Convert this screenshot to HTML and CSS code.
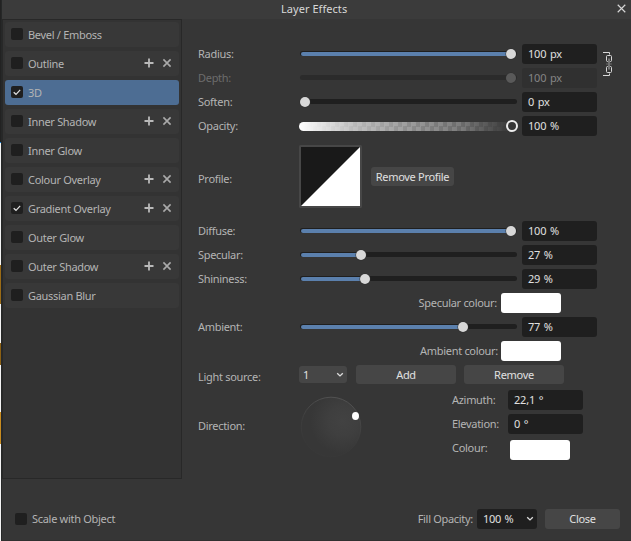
FILE: index.html
```
<!DOCTYPE html>
<html lang="en">
<head>
<meta charset="utf-8">
<title>Layer Effects</title>
<link rel="stylesheet" href="styles.css">
</head>
<body>
<svg width="0" height="0" class="defs">
  <symbol id="tick" viewBox="0 0 12 12"><path d="M2.7 6.2 5 8.3 9.2 3.9" fill="none" stroke="#e2e2e2" stroke-width="1.2"/></symbol>
  <symbol id="plus" viewBox="0 0 10 10"><path d="M5 .5v9M.5 5h9" stroke="#b9b9b9" stroke-width="1.8"/></symbol>
  <symbol id="cross" viewBox="0 0 10 10"><path d="M1.4 1.4 8.6 8.6M8.6 1.4 1.4 8.6" stroke="#a9a9a9" stroke-width="1.6"/></symbol>
  <symbol id="chevron" viewBox="0 0 8 6"><path d="M1.2 1.3 4 3.9 6.8 1.3" fill="none" stroke="#dcdcdc" stroke-width="1.4"/></symbol>
</svg>
<div class="app">
  <div class="backdrop"></div>
  <div class="dialog">
    <header class="titlebar">
      <h1>Layer Effects</h1>
      <svg class="close-x" viewBox="0 0 10 10"><path d="M.8.8 9.2 9.2M9.2.8.8 9.2" stroke="#d6d6d6" stroke-width="1.3"/></svg>
    </header>
    <main class="body">
      <ul class="effects">
        <li><i class="check"></i><span>Bevel / Emboss</span></li>
        <li><i class="check"></i><span>Outline</span><svg class="act"><use href="#plus"/></svg><svg class="act"><use href="#cross"/></svg></li>
        <li class="selected"><i class="check"><svg><use href="#tick"/></svg></i><span>3D</span></li>
        <li><i class="check"></i><span>Inner Shadow</span><svg class="act"><use href="#plus"/></svg><svg class="act"><use href="#cross"/></svg></li>
        <li><i class="check"></i><span>Inner Glow</span></li>
        <li><i class="check"></i><span>Colour Overlay</span><svg class="act"><use href="#plus"/></svg><svg class="act"><use href="#cross"/></svg></li>
        <li><i class="check"><svg><use href="#tick"/></svg></i><span>Gradient Overlay</span><svg class="act"><use href="#plus"/></svg><svg class="act"><use href="#cross"/></svg></li>
        <li><i class="check"></i><span>Outer Glow</span></li>
        <li><i class="check"></i><span>Outer Shadow</span><svg class="act"><use href="#plus"/></svg><svg class="act"><use href="#cross"/></svg></li>
        <li><i class="check"></i><span>Gaussian Blur</span></li>
      </ul>
      <section class="settings">
        <div class="linked">
          <div class="stack">
            <div class="row"><label>Radius:</label><div class="slider" style="--v:211px"><b></b></div><div class="field">100 px</div></div>
            <div class="row disabled"><label>Depth:</label><div class="slider" style="--v:211px"><b></b></div><div class="field">100 px</div></div>
            <div class="row"><label>Soften:</label><div class="slider empty" style="--v:5px"><b></b></div><div class="field">0 px</div></div>
            <div class="row"><label>Opacity:</label><div class="alpha"><b></b></div><div class="field">100 %</div></div>
          </div>
          <svg class="link" viewBox="0 0 10 26" fill="none">
            <path d="M0 1.5h6.500v2M0 24.500h6.500v-2" stroke="#d8d8d8"/>
            <path d="M5 10.500h-.5q-1 0-1-1v-4q0-1 1-1h3q1 0 1 1v4q0 1-1 1H7M5 15.500h-.5q-1 0-1 1v4q0 1 1 1h3q1 0 1-1v-4q0-1-1-1H7" stroke="#d8d8d8"/>
            <path d="M6 7.500v11" stroke="#8c8c8c" stroke-width="1.500"/>
            <path d="M3 13h6" stroke="#6c6c6c"/>
          </svg>
        </div>
        <div class="row profile"><label>Profile:</label>
          <svg class="curve" viewBox="0 0 63 63"><rect width="63" height="63" rx="1.500" fill="#474747"/><rect x="2" y="2" width="59" height="59" fill="#191919"/><path d="M61 2v59H2z" fill="#fff"/></svg>
          <button class="remove-profile">Remove Profile</button>
        </div>
        <div class="stack">
          <div class="row"><label>Diffuse:</label><div class="slider" style="--v:211px"><b></b></div><div class="field">100 %</div></div>
          <div class="row"><label>Specular:</label><div class="slider" style="--v:61px"><b></b></div><div class="field">27 %</div></div>
          <div class="row"><label>Shininess:</label><div class="slider" style="--v:65px"><b></b></div><div class="field">29 %</div></div>
          <div class="row colour"><span>Specular colour:</span><div class="swatch"></div></div>
          <div class="row"><label>Ambient:</label><div class="slider" style="--v:163px"><b></b></div><div class="field">77 %</div></div>
          <div class="row colour"><span class="amb">Ambient colour:</span><div class="swatch"></div></div>
        </div>
        <div class="row source"><label>Light source:</label>
          <div class="select small"><span>1</span><svg><use href="#chevron"/></svg></div>
          <button>Add</button><button>Remove</button>
        </div>
        <div class="row direction"><label>Direction:</label>
          <svg class="dial" viewBox="0 0 62 62">
            <defs>
              <radialGradient id="glow" cx=".7" cy=".4" r=".55"><stop offset="0" stop-color="#424242"/><stop offset=".45" stop-color="#3f3f3f"/><stop offset="1" stop-color="#373737"/></radialGradient>
              <linearGradient id="rim" x1=".65" y1="0" x2=".35" y2="1"><stop offset="0" stop-color="#525252"/><stop offset=".5" stop-color="#3e3e3e"/><stop offset=".85" stop-color="#383838"/></linearGradient>
            </defs>
            <circle cx="31" cy="31" r="29.800" fill="url(#glow)" stroke="url(#rim)"/>
            <ellipse cx="55.500" cy="20" rx="3.500" ry="4" fill="#fff"/>
          </svg>
          <div class="angles">
            <span>Azimuth:</span><div class="field">22,1 °</div>
            <span>Elevation:</span><div class="field">0 °</div>
            <span>Colour:</span><div class="swatch"></div>
          </div>
        </div>
      </section>
    </main>
    <footer class="footer">
      <i class="check"></i><span class="scale">Scale with Object</span>
      <span class="fill">Fill Opacity:</span>
      <div class="select dark"><span>100 %</span><svg><use href="#chevron"/></svg></div>
      <button>Close</button>
    </footer>
  </div>
</div>
</body>
</html>
```
FILE: styles.css
```
* { box-sizing: border-box; }
body {
  margin: 0;
  background: #363636;
  color: #b4b4b4;
  font: 11px/15px "Noto Sans", "Open Sans", sans-serif;
  letter-spacing: -.3px;
  white-space: nowrap;
}
.defs { position: absolute; }
.app { display: flex; width: 631px; height: 541px; overflow: hidden; }
.backdrop {
  width: 1px;
  background: linear-gradient(#222 0 142px, #1684d8 142px 143px, #f4f4f4 143px 265px,
    #9b6b16 265px 304px, #f4f4f4 304px 343px, #8c6013 343px 365px,
    #f4f4f4 365px 412px, #c98c20 412px 444px, #f4f4f4 444px);
}
.dialog {
  width: 630px;
  border-left: 1px solid #262828;
  border-bottom: 1px solid #303030;
  display: flex;
  flex-direction: column;
}
.titlebar {
  height: 19px;
  flex: none;
  display: flex;
  background: #3b3b3b;
  padding-left: 279px;
}
h1 { margin: 1px 0 0; font-size: 11px; line-height: 15px; font-weight: 400; color: #d8d8d8; letter-spacing: .05px; }
.close-x { width: 9px; height: 9px; margin: 4px 5px 0 auto; }
.body { display: flex; height: 460px; flex: none; }
.effects {
  width: 180px;
  margin: 0;
  padding: 2px 2px 0 2px;
  border: 1px solid #282828;
  background: #333;
  list-style: none;
  display: flex;
  flex-direction: column;
  gap: 4px;
}
.effects li {
  height: 25px;
  flex: none;
  display: flex;
  align-items: center;
  padding: 0 7px 0 6px;
  border-radius: 3px;
  background: #383838;
}
.effects .selected { background: #4d6d93; }
.effects span { margin: 0 auto 0 5px; }
.check { width: 12px; height: 12px; flex: none; border-radius: 2px; background: #1f1f1f; margin-bottom: 1px; }
.check svg { display: block; width: 12px; height: 12px; }
.act { width: 10px; height: 10px; margin: 0 0 1px 8px; }
.settings { padding: 25px 0 0 16px; flex: 1; }
.linked { display: flex; gap: 6px; }
.link { width: 10px; height: 26px; margin-top: 7px; }
.stack { display: flex; flex-direction: column; gap: 4px; }
.row { display: flex; align-items: center; height: 20px; }
label { width: 101px; flex: none; padding-bottom: 1px; }
.slider {
  position: relative;
  width: 217px;
  height: 5px;
  margin: 0 5px 1px 1px;
  border-radius: 3px;
  background: #1f1f1f;
}
.slider::before {
  content: "";
  position: absolute;
  left: 1px;
  top: 1px;
  width: var(--v);
  height: 4px;
  border-radius: 2px;
  background: #5b80ad;
}
.slider.empty::before, .disabled .slider::before { background: none; }
.slider b {
  position: absolute;
  left: calc(var(--v) - 5px);
  top: -2px;
  width: 10px;
  height: 10px;
  border-radius: 50%;
  background: #d8d8d8;
  box-shadow: 0 0 0 .5px #303030;
}
.field {
  width: 75px;
  height: 20px;
  padding: 2px 6px 0;
  border-radius: 3px;
  background: #1f1f1f;
  color: #e0e0e0;
  line-height: 15px;
  letter-spacing: -.2px;
  word-spacing: 1px;
}
.disabled label { color: #6c6c6c; }
.disabled .slider { background: #2b2b2b; }
.disabled .slider b { background: #595959; }
.disabled .field { background: #303030; color: #858585; }
.alpha {
  position: relative;
  width: 217px;
  height: 9px;
  margin: 0 6px 0 0;
  border-radius: 5px;
  background:
    linear-gradient(90deg, #fff 0, #c6c6c6d8 25%, #999999b0 50%, #686868b0 75%, #363636 98%),
    repeating-conic-gradient(#a8a8a8 0 25%, #727272 0 50%) 0 0 / 9px 9px;
}
.alpha b {
  position: absolute;
  left: 207px;
  top: -2px;
  width: 12px;
  height: 12px;
  border: 2px solid #eee;
  border-radius: 50%;
  background: #363636;
}
.profile { height: 63px; margin: 9px 0 13px; }
.profile label { padding: 4px 0 0; }
.curve { width: 63px; height: 63px; }
button {
  width: 100px;
  height: 19px;
  padding: 0;
  border: 0;
  border-radius: 3px;
  background: #464646;
  color: #e0e0e0;
  font: inherit;
  letter-spacing: inherit;
}
.remove-profile { width: 83px; margin-left: 9px; }
.colour span { width: 299px; text-align: right; padding-bottom: 1px; }
.colour .amb { width: 300px; }
.swatch { width: 60px; height: 20px; border-radius: 3px; background: #fff; }
.colour .swatch { margin-left: 4px; }
.colour .amb + .swatch { margin-left: 3px; }
.source { height: 19px; margin: 4px 0 5px; }
.source label { padding: 4px 0 0; }
.source button { margin-left: 8px; }
.source .select + button { margin-left: 9px; }
.select { display: flex; align-items: center; justify-content: space-between; border-radius: 3px; color: #e0e0e0; word-spacing: 1px; }
.select svg { width: 8px; height: 6px; }
.select.small { width: 48px; height: 17px; padding: 0 3px 0 4px; background: #464646; }
.direction { height: 71px; align-items: flex-start; }
.direction label { padding: 29px 0 0; }
.dial { width: 62px; height: 62px; margin: 7px 0 0 1px; }
.angles {
  display: grid;
  grid-template-columns: 56px 75px;
  grid-template-rows: 20px 20px 20px;
  row-gap: 4px;
  margin: 1px 0 0 90px;
}
.angles span { padding-top: 2px; }
.angles .swatch { margin: 2px 0 0 2px; }
.footer { display: flex; align-items: center; height: 20px; margin-top: 30px; padding: 0 11px 0 13px; }
.footer span { padding-bottom: 1px; }
.footer .check { margin: 0; }
.scale { margin: 0 auto 0 5px; }
.select.dark { width: 60px; height: 20px; margin: 0 8px 0 4px; padding: 0 3px 0 6px; background: #1f1f1f; }
.footer button { width: 75px; height: 20px; padding-bottom: 1px; }
```
